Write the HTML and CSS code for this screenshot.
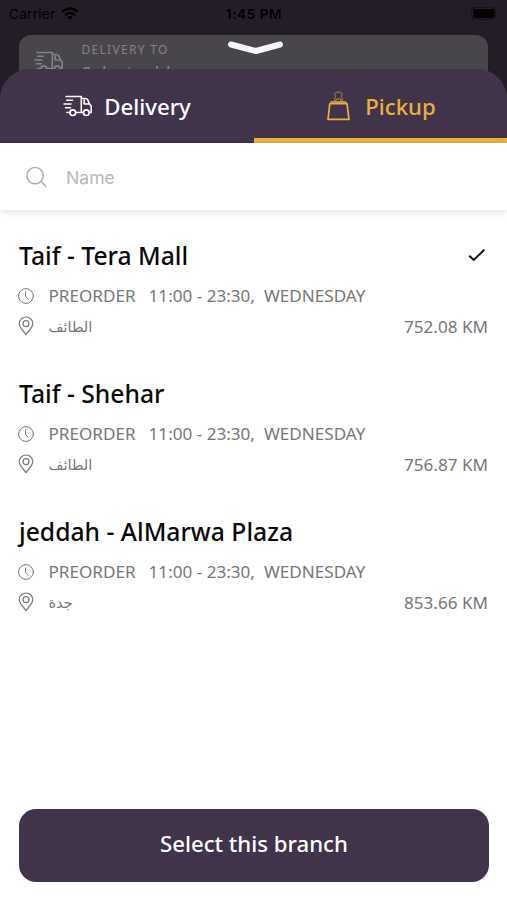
FILE: index.html
```html
<!DOCTYPE html>
<html lang="en">
<head>
<meta charset="utf-8">
<meta name="viewport" content="width=device-width, initial-scale=1">
<title>Select branch</title>
<link rel="stylesheet" href="styles.css">
</head>
<body>
<svg class="defs" width="0" height="0" aria-hidden="true">
  <symbol id="truck" viewBox="0 0 30 22">
    <g fill="none" stroke="currentColor" stroke-width="1.6" stroke-linecap="round" stroke-linejoin="round">
      <path d="M3 1.5H18.3V17.5H13M18.3 3.5H22.5Q24 3.5 24.8 5L26.5 9L28.2 11V17.5H26.8M21.2 5V9H26.3M3.8 17.5H6.6M18.3 17.5H20.2M3.8 5.2H9.5M1 9H8M2.5 12.7H7.5"/>
      <circle cx="9.8" cy="17.7" r="2.8"/>
      <circle cx="23.3" cy="17.7" r="2.8"/>
    </g>
  </symbol>
  <symbol id="clock" viewBox="0 0 18 18">
    <g fill="none" stroke="currentColor" stroke-linecap="round">
      <circle cx="9" cy="9" r="7.4"/>
      <path d="M8.5 5V9.3L11 12.3"/>
    </g>
  </symbol>
  <symbol id="pin" viewBox="0 0 18 20">
    <g fill="none" stroke="currentColor" stroke-width="1.2" stroke-linejoin="round">
      <path d="M9 18.6C7 15.5 2.2 11.5 2.2 7.8A6.8 6.8 0 0 1 15.8 7.8C15.8 11.5 11 15.5 9 18.6Z"/>
      <circle cx="9" cy="7.7" r="3"/>
    </g>
  </symbol>
</svg>
<div class="screen">
  <header class="status">
    <div class="carrier">Carrier
      <svg width="18" height="13" viewBox="0 0 18 13"><g fill="none" stroke="#000" stroke-width="2.4"><path d="M1 4.8Q9 -2 17 4.8M4 8Q9 4 14 8"/></g><path d="M6.3 9.9Q9 7.9 11.7 9.9L9 12.7Z"/></svg>
    </div>
    <div class="time">1:45 PM</div>
    <svg class="battery" width="28" height="13" viewBox="0 0 28 13"><rect x=".5" y=".5" width="24" height="12" rx="3.5" fill="none" stroke="#17131b"/><rect x="2" y="2" width="21.5" height="9" rx="2"/><path d="M26 4.5Q28 6.5 26 8.5Z" fill="#17131b"/></svg>
  </header>
  <div class="address">
    <svg class="address-icon" width="30" height="22"><use href="#truck"/></svg>
    <div>
      <div class="address-label">DELIVERY TO</div>
      <div class="address-value">Select address</div>
    </div>
    <svg class="handle" width="60" height="18" viewBox="0 0 60 18"><path d="M5 5.5L30 12L54 5.5" fill="none" stroke="#f7f6f9" stroke-width="6" stroke-linecap="round" stroke-linejoin="round"/></svg>
  </div>
  <main class="sheet">
    <nav class="tabs">
      <div class="tab delivery"><svg width="30" height="22"><use href="#truck"/></svg><span>Delivery</span></div>
      <div class="tab pickup">
        <svg width="26" height="32" viewBox="0 0 26 32"><g fill="none" stroke="currentColor" stroke-linejoin="round"><path d="M4.8 13.7H22L24 29.4H3Z" stroke-width="1.7"/><path d="M5.5 12H21.3" stroke-width="1.4"/><path d="M9.3 11.2L10.5 6.2L9.5 4L11.2 2.2H15.7L17.4 4L16.4 6.2L17.8 11.2" opacity=".6"/><path d="M10.2 11.4L11.7 9H15.3L16.8 11.4" opacity=".7"/></g></svg>
        <span>Pickup</span>
      </div>
    </nav>
    <div class="search">
      <svg width="22" height="22" viewBox="0 0 22 22"><g fill="none" stroke="#aaa" stroke-width="1.4" stroke-linecap="round"><circle cx="9.1" cy="9.6" r="8.2"/><path d="M15.1 15.6L19.7 20"/></g></svg>
      <span>Name</span>
    </div>
    <div class="list">
      <section class="branch">
        <h2><span>Taif - Tera Mall</span><svg width="18" height="14" viewBox="0 0 18 14"><path d="M1.2 7.7L5.8 12L16.3 1.7" fill="none" stroke="#111" stroke-width="1.9"/></svg></h2>
        <div class="row hours"><svg width="18" height="18"><use href="#clock"/></svg><span class="mode">PREORDER</span><span class="range">11:00 - 23:30,</span><span>WEDNESDAY</span></div>
        <div class="row place"><svg width="18" height="20"><use href="#pin"/></svg><span class="city" lang="ar" dir="rtl">الطائف</span><span class="distance">752.08 KM</span></div>
      </section>
      <section class="branch">
        <h2><span>Taif - Shehar</span></h2>
        <div class="row hours"><svg width="18" height="18"><use href="#clock"/></svg><span class="mode">PREORDER</span><span class="range">11:00 - 23:30,</span><span>WEDNESDAY</span></div>
        <div class="row place"><svg width="18" height="20"><use href="#pin"/></svg><span class="city" lang="ar" dir="rtl">الطائف</span><span class="distance">756.87 KM</span></div>
      </section>
      <section class="branch">
        <h2><span>jeddah - AlMarwa Plaza</span></h2>
        <div class="row hours"><svg width="18" height="18"><use href="#clock"/></svg><span class="mode">PREORDER</span><span class="range">11:00 - 23:30,</span><span>WEDNESDAY</span></div>
        <div class="row place"><svg width="18" height="20"><use href="#pin"/></svg><span class="city" lang="ar" dir="rtl">جدة</span><span class="distance">853.66 KM</span></div>
      </section>
    </div>
    <button class="select" type="button">Select this branch</button>
  </main>
</div>
</body>
</html>
```
FILE: styles.css
```css
* { box-sizing: border-box; }
body { margin: 0; font-family: "Noto Sans", sans-serif; }
svg { display: block; flex: none; }
.defs { position: absolute; }
.screen { height: 900px; display: flex; flex-direction: column; background: #231d28; overflow: hidden; }
.status { height: 35px; flex: none; padding: 0 8px 8px 9px; display: grid; grid-template-columns: 1fr auto 1fr; align-items: center; font: 13.5px Inter, sans-serif; color: #000; }
.carrier { display: flex; align-items: center; gap: 6px; letter-spacing: .3px; }
.time { font-weight: 600; letter-spacing: .6px; }
.battery { justify-self: end; }
.address { position: relative; flex: none; height: 68px; margin: 0 19px -34px; padding: 6px 15px; border-radius: 12px; background: #49464b; color: #858287; display: flex; gap: 17.5px; }
.address-icon { margin-top: 10px; }
.address-label { font-size: 12px; line-height: 18px; letter-spacing: 1.3px; }
.address-value { font-size: 17.5px; line-height: 24px; margin-top: 2px; letter-spacing: .5px; }
.handle { position: absolute; left: 206.5px; top: 4px; }
.sheet { position: relative; flex: 1; display: flex; flex-direction: column; background: linear-gradient(#40334a 60px, #fff 60px); border-radius: 30px 30px 0 0; overflow: hidden; }
.tabs { height: 74px; flex: none; display: grid; grid-template-columns: 254px 1fr; background: #40334a; color: #fff; font-size: 22.2px; font-weight: 500; }
.tab { display: flex; align-items: center; justify-content: center; line-height: 30px; }
.tab span { padding-top: 2px; }
.delivery { gap: 11px; }
.pickup { gap: 14px; color: #e8b13d; border-bottom: 5px solid #e8b13d; padding-top: 5px; }
.search { height: 67px; flex: none; padding: 1px 26px 0; display: flex; align-items: center; gap: 18px; background: #fff; color: #b8b8b8; font: 17.6px Inter, sans-serif; box-shadow: 0 2px 7px rgba(0, 0, 0, .13); }
.list { padding: 28px 19px 0; flex: 1; }
.branch { height: 138px; color: #777; }
.branch h2 { margin: 0; height: 36px; display: flex; align-items: center; justify-content: space-between; font-size: 24.7px; line-height: 36px; font-weight: 500; color: #0a0a0a; }
.branch h2 svg { margin: -2px 2px 0 0; }
.row { display: flex; align-items: center; height: 30px; font-size: 17.1px; line-height: 30px; white-space: nowrap; }
.row svg { margin-left: -2px; margin-right: 13.5px; }
.hours { margin-top: 7px; }
.place span { padding-top: 2px; }
.place svg { margin-top: -1px; }
.mode { margin-right: 13px; }
.range { margin-right: 9px; }
.city { font-family: "DejaVu Sans", sans-serif; font-size: 14.5px; }
.distance { margin-left: auto; }
.select { flex: none; margin: 0 18px 18px 19px; padding: 0 0 5px; height: 73px; border: 0; border-radius: 17px; background: #40334a; color: #fff; font: 500 22.2px "Noto Sans", sans-serif; }
```
